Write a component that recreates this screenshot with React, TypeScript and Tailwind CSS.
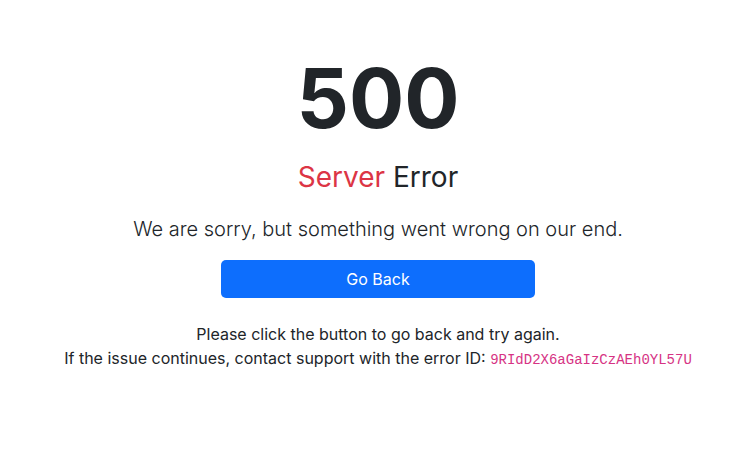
export default function App() {
  return (
    <div className="min-h-[457px] bg-white pl-[6px] text-[#212529] font-['Inter','Noto_Sans',sans-serif]">
      <div className="flex flex-col items-center pt-[50px] text-center">
        <h1 className="text-[82px] font-bold leading-[1.2]">500</h1>
        <h2 className="mt-[13px] text-[28px] leading-[1.2]">
          <span className="text-[#dc3545]">Server</span> Error
        </h2>
        <p className="mt-[19px] text-[20px] font-light leading-[1.5]">
          We are sorry, but something went wrong on our end.
        </p>
        <button
          type="button"
          className="mt-[16px] h-[38px] w-[314px] rounded-[5px] bg-[#0d6efd] text-[16px] text-white"
        >
          Go Back
        </button>
        <p className="mt-[24px] text-[16px] leading-[24px]">
          Please click the button to go back and try again.
          <br />
          If the issue continues, contact support with the error ID:{' '}
          <code className="font-['Liberation_Mono',monospace] text-[14px] text-[#d63384]">
            9RIdD2X6aGaIzCzAEh0YL57U
          </code>
        </p>
      </div>
    </div>
  );
}
